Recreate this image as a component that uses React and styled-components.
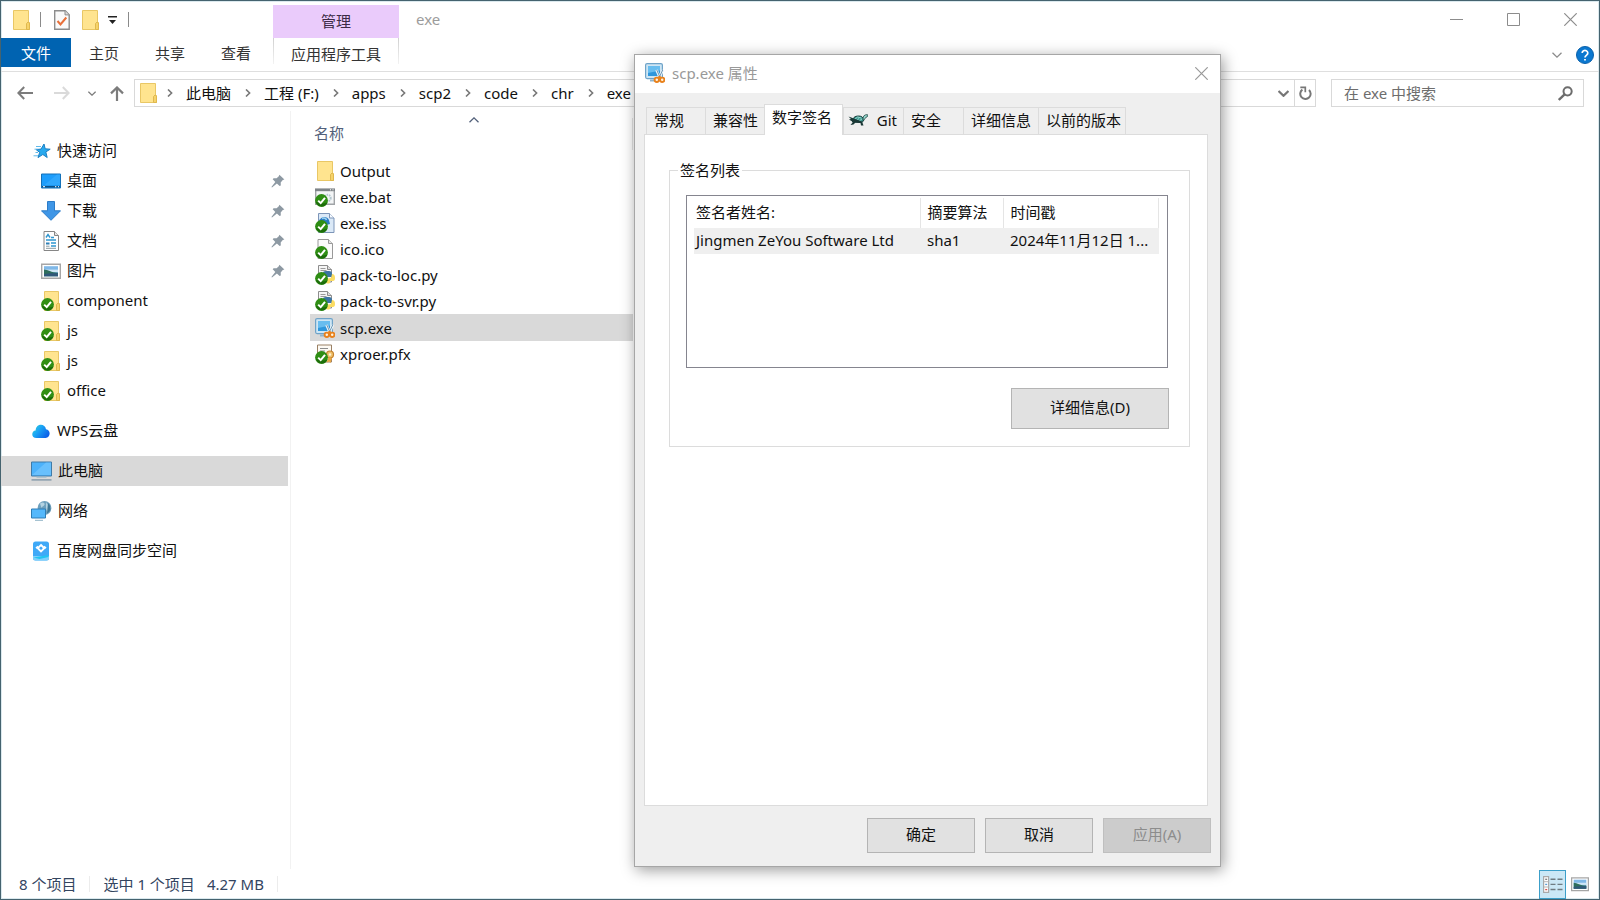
import { useState } from 'react'
import styled, { createGlobalStyle, css } from 'styled-components'

const GlobalStyle = createGlobalStyle`
    * {
        box-sizing: border-box;
    }

    body {
        margin: 0;
        background: #fff;
        color: #111;
        font-family: 'Noto Sans', 'Noto Sans CJK SC', sans-serif;
        font-size: 15px;
        line-height: 20px;
    }

    button,
    input {
        font: inherit;
        color: inherit;
    }

    button {
        padding: 0;
        border: 0;
        background: none;
        white-space: nowrap;
    }

    svg {
        display: block;
        flex: none;
    }
`

/* ---------- explorer window ---------- */

const Explorer = styled.div`
    position: relative;
    display: flex;
    flex-direction: column;
    min-height: 100vh;
    border: 1px solid #45636f;
    box-shadow: inset 0 0 0 1px #dbe9ee;
    overflow: hidden;
`

const TitleBar = styled.header`
    display: flex;
    height: 37px;
`

const QuickTools = styled.div`
    display: flex;
    align-items: center;
    flex: 0 0 272px;
    padding-left: 10px;
`

const ToolButton = styled.button`
    display: flex;
    margin-right: ${({ $gap }) => $gap || 0}px;
`

const ToolLine = styled.span`
    width: 1px;
    height: 15px;
    margin-right: ${({ $gap }) => $gap || 0}px;
    background: #8a8a8a;
`

const ManageTab = styled.button`
    width: 126px;
    margin-top: 4px;
    padding-bottom: 2px;
    background: #eacbfb;
    color: #3c2b45;
`

const WindowTitle = styled.h1`
    flex: 1;
    margin: 0;
    padding-left: 17px;
    color: #9c9c9c;
    font-size: 15px;
    font-weight: 400;
    line-height: 37px;
`

const WindowButton = styled.button`
    display: flex;
    align-items: center;
    justify-content: center;
    width: 57px;
    height: 36px;
    color: #8c8c8c;
`

const Ribbon = styled.nav`
    display: flex;
    height: 34px;
    padding-bottom: 4px;
    border-bottom: 1px solid #dfdfdf;
`

const FileTab = styled.button`
    width: 70px;
    background: #0063b1;
    color: #fff;
`

const RibbonTab = styled.button`
    width: 66px;
    padding-top: 1px;
    color: #333;
`

const AppToolsTab = styled.button`
    width: 126px;
    height: 26px;
    margin: 0 auto 0 4px;
    padding-top: 5px;
    border: 1px solid;
    border-width: 0 1px;
    border-image: linear-gradient(#cfcfcf, #f4f4f4) 1;
    color: #333;
`

const RibbonButton = styled.button`
    display: flex;
    align-items: center;
    margin-right: ${({ $gap }) => $gap}px;
    padding-top: 4px;
    color: #8c8c8c;
`

const AddressRow = styled.div`
    display: flex;
    align-items: center;
    height: 39px;
    padding: 3px 15px 0 15px;
`

const ArrowButton = styled.button`
    display: flex;
    justify-content: center;
    width: ${({ $width }) => $width}px;
    margin-left: ${({ $gap }) => $gap || 0}px;
    color: ${({ disabled }) => (disabled ? '#dadada' : '#7c7c7c')};
`

const AddressBar = styled.div`
    display: flex;
    flex: 1;
    align-items: center;
    height: 28px;
    margin-left: 3px;
    padding-left: 3px;
    border: 1px solid #d9d9d9;
    white-space: nowrap;
`

const Crumb = styled.button`
    display: flex;
    align-items: center;
    gap: 13px;

    & > svg {
        margin-left: 14px;
        color: #777;
    }

    &:first-of-type > svg {
        margin-left: 9px;
    }
`

const AddressButton = styled.button`
    display: flex;
    align-items: center;
    justify-content: center;
    width: 21px;
    height: 26px;
    margin-left: ${({ $push }) => ($push ? 'auto' : 0)};
    border-left: ${({ $line }) => ($line ? '1px solid #d9d9d9' : 0)};
    color: #777;
`

const SearchBox = styled.label`
    display: flex;
    align-items: center;
    flex: 0 0 253px;
    min-width: 0;
    height: 28px;
    margin-left: 15px;
    padding: 0 10px 0 12px;
    border: 1px solid #d9d9d9;
    color: #6d6d6d;
`

const SearchInput = styled.input`
    flex: 1;
    min-width: 0;
    padding: 0;
    border: 0;
    outline: 0;
    background: none;

    &::placeholder {
        color: #6d6d6d;
        opacity: 1;
    }
`

const Content = styled.div`
    display: flex;
    flex: 1;
`

const Sidebar = styled.nav`
    flex: 0 0 290px;
    padding: 25px 2px 0 0;
    border-right: 1px solid #f2f2f2;
`

const SideLink = styled.a`
    display: flex;
    align-items: center;
    height: 30px;
    margin-top: ${({ $section }) => ($section ? 10 : 0)}px;
    padding-left: ${({ $nested }) => ($nested ? 40 : 30)}px;
    padding-right: 3px;
    background: ${({ $active }) => ($active ? '#d9d9d9' : 'none')};
    color: #111;
    text-decoration: none;

    & > span {
        flex: 1;
        margin-left: 6px;
        padding-bottom: 2px;
    }
`

const FilePane = styled.main`
    flex: 0 0 342px;
    padding: 6px 0 0 19px;
`

const ColumnHead = styled.button`
    display: flex;
    flex-direction: column;
    width: 100%;
    height: 33px;
    padding-left: 4px;
    background: linear-gradient(#e5e5e5, #e5e5e5) right bottom / 1px 32px no-repeat;
    color: #52607a;
    text-align: left;

    & > svg {
        align-self: center;
    }
`

const FileList = styled.ul`
    margin: 8px 0 0;
    padding: 0;
    list-style: none;
`

const FileRow = styled.button`
    display: flex;
    align-items: center;
    gap: 5px;
    width: 100%;
    height: ${({ $active }) => ($active ? 27 : 26)}px;
    padding-left: 5px;
    background: ${({ $active }) => ($active ? '#d9d9d9' : 'none')};
`

const StatusBar = styled.footer`
    display: flex;
    align-items: center;
    height: 30px;
    padding-left: 18px;
    color: #33455f;
    white-space: nowrap;
`

const StatusText = styled.span`
    margin-right: ${({ $gap }) => $gap}px;
`

const StatusLine = styled.span`
    width: 1px;
    height: 16px;
    margin-right: 13px;
    background: #ececec;
`

const ViewButton = styled.button`
    display: flex;
    align-items: center;
    justify-content: center;
    width: 27px;
    height: 29px;
    border: 1px solid ${({ $active }) => ($active ? '#3c9fc9' : 'transparent')};
    background: ${({ $active }) => ($active ? '#cbe8f6' : 'none')};
`

const Views = styled.div`
    display: flex;
    margin-left: auto;
    padding-right: 6px;
`

/* ---------- properties dialog ---------- */

const Dialog = styled.section`
    position: absolute;
    top: 53px;
    left: 633px;
    width: 587px;
    padding-bottom: 13px;
    border: 1px solid #a6a6a6;
    background: #efefef;
    box-shadow: 2px 3px 14px rgba(0, 0, 0, 0.4);
`

const DialogTitle = styled.header`
    display: flex;
    align-items: center;
    gap: 7px;
    height: 38px;
    padding: 0 12px 2px 10px;
    background: #fff;
    color: #999;
`

const DialogHeading = styled.h2`
    flex: 1;
    margin: 0;
    font-size: 15px;
    font-weight: 400;
    line-height: 20px;
`

const Tabs = styled.div`
    display: flex;
    align-items: flex-end;
    padding: 11px 0 0 11px;
`

const selectedTab = css`
    height: 31px;
    margin-bottom: -1px;
    padding-bottom: 7px;
    border-right: 1px solid #dcdcdc;
    background: #fff;
`

const Tab = styled.button`
    display: flex;
    align-items: center;
    justify-content: space-between;
    width: ${({ $width }) => $width}px;
    height: 27px;
    padding: 0 6px 3px ${({ $icon }) => ($icon ? 4 : 7)}px;
    border: 1px solid #dcdcdc;
    border-width: 1px 0 0 1px;

    &:last-child {
        border-right-width: 1px;
    }

    ${({ $selected }) => $selected && selectedTab}
`

const TabPanel = styled.div`
    min-height: 672px;
    margin: 0 12px 0 9px;
    padding: 25px 17px 0 24px;
    border: 1px solid #dcdcdc;
    background: #fff;
`

const Group = styled.fieldset`
    min-width: 0;
    margin: 0;
    padding: 15px 21px 17px 16px;
    border: 1px solid #dcdcdc;
`

const Legend = styled.legend`
    margin-left: -8px;
    padding: 0 2px;
`

const ListBox = styled.div`
    height: 173px;
    padding: 2px 8px 0 7px;
    border: 1px solid #85858f;
`

const SignTable = styled.table`
    width: 100%;
    border-collapse: collapse;
    table-layout: fixed;
    white-space: nowrap;
`

const HeadCell = styled.th`
    width: ${({ $width }) => $width}px;
    height: 30px;
    padding: 0 0 3px ${({ $first }) => ($first ? 2 : 7)}px;
    border-right: 1px solid #e5e5e5;
    font-weight: 400;
    text-align: left;
`

const Cell = styled.td`
    height: 26px;
    padding: 0 0 2px ${({ $first }) => ($first ? 2 : 7)}px;
    background: #efefef;
`

const PushButton = styled.button`
    width: 108px;
    height: 35px;
    padding-bottom: 3px;
    border: 1px solid #b4b4b4;
    background: #e1e1e1;

    &:disabled {
        border-color: #bfbfbf;
        background: #ccc;
        color: #8c8c8c;
    }
`

const DetailButton = styled(PushButton)`
    display: block;
    width: 158px;
    height: 41px;
    margin: 20px -1px 0 auto;
`

const DialogButtons = styled.div`
    display: flex;
    justify-content: flex-end;
    gap: 10px;
    padding: 12px 9px 0 0;
`

/* ---------- icons ---------- */

const Folder = () => (
    <svg width="20" height="20" viewBox="0 0 20 20">
        <path d="M2.5 .5h15v12h1v7h-16z" fill="#ffe48f" stroke="#e9c765" />
        <path d="M15.5 19.5v-6l1.5-1.5 1.5 1v6.5z" fill="#f6d36a" stroke="#dfb84f" />
    </svg>
)

const Tick = () => (
    <g>
        <circle cx="6.5" cy="13.5" r="6.4" fill="#2f8e14" />
        <path d="M.9 14.5a6 6 0 0 0 11.5 1A13 13 0 0 1 .9 14.5z" fill="#1c6d0a" />
        <path d="M3.2 13.6l2.5 2.5 4.3-5.2" fill="none" stroke="#fff" strokeWidth="2" />
    </g>
)

const TickFolder = () => (
    <svg width="20" height="20" viewBox="0 0 20 20">
        <path d="M3.5 .5h14v12h1v7h-15z" fill="#ffe48f" stroke="#e9c765" />
        <path d="M15.5 19.5v-6l1.5-1.5 1.5 1v6.5z" fill="#f6d36a" stroke="#dfb84f" />
        <Tick />
    </svg>
)

const CheckDoc = () => (
    <svg width="16" height="20" viewBox="0 0 16 20">
        <path d="M.7.7h10.5l4 4v14.6H.7z" fill="#fafafa" stroke="#8c8c8c" strokeWidth="1.4" />
        <path d="M11 .7v4.2h4.2" fill="#ddd" stroke="#8c8c8c" />
        <path d="M3.5 11l3 3.5 5.8-7" fill="none" stroke="#e8703a" strokeWidth="2" />
    </svg>
)

const MoreCaret = () => (
    <svg width="9" height="8" viewBox="0 0 9 8">
        <path d="M0 0h9v1.4H0zM1 4h7L4.5 8z" fill="#222" />
    </svg>
)

const Minimize = () => (
    <svg width="13" height="13" viewBox="0 0 13 13">
        <path d="M0 6.5h13" stroke="currentColor" />
    </svg>
)

const Maximize = () => (
    <svg width="13" height="13" viewBox="0 0 13 13">
        <path d="M.5.5h12v12H.5z" fill="none" stroke="currentColor" />
    </svg>
)

const Close = () => (
    <svg width="13" height="13" viewBox="0 0 13 13">
        <path d="M.3.3l12.4 12.4M12.7.3L.3 12.7" stroke="currentColor" strokeWidth="1.2" />
    </svg>
)

const Chevron = ({ width = 10, height = 6, stroke = 1.6, up }) => (
    <svg width={width} height={height} viewBox="0 0 10 6" fill="none" stroke="currentColor" strokeWidth={stroke}>
        <path d={up ? 'M.5 5.3L5 .9l4.5 4.4' : 'M.5.7L5 5.1 9.5.7'} />
    </svg>
)

const ChevronRight = () => (
    <svg width="6" height="8" viewBox="0 0 6 8">
        <path d="M1 .5L4.6 4 1 7.5" fill="none" stroke="currentColor" strokeWidth="1.6" />
    </svg>
)

const Help = () => (
    <svg width="18" height="18" viewBox="0 0 18 18">
        <circle cx="9" cy="9" r="8.5" fill="#0b78d0" stroke="#0a60aa" />
        <path d="M6.2 7a2.8 2.6 0 1 1 4.4 2.1C9.4 10 9 10.3 9 11.6" fill="none" stroke="#fff" strokeWidth="1.7" />
        <path d="M8.1 12.9h1.8v1.7H8.1z" fill="#fff" />
    </svg>
)

const ArrowLeft = () => (
    <svg width="16" height="14" viewBox="0 0 16 14" fill="none" stroke="currentColor" strokeWidth="2">
        <path d="M7.2 1L1.4 7l5.8 6M1.6 7H16" />
    </svg>
)

const ArrowRight = () => (
    <svg width="16" height="14" viewBox="0 0 16 14" fill="none" stroke="currentColor" strokeWidth="2">
        <path d="M8.8 1l5.8 6-5.8 6M14.4 7H0" />
    </svg>
)

const ArrowUp = () => (
    <svg width="14" height="15" viewBox="0 0 14 15" fill="none" stroke="currentColor" strokeWidth="2.2">
        <path d="M1 7.4l6-5.9 6 5.9M7 2v13" />
    </svg>
)

const Refresh = () => (
    <svg width="13" height="14" viewBox="0 0 13 14" fill="none" stroke="currentColor" strokeWidth="2">
        <path d="M3.4 3.6a5.2 5.2 0 1 0 6.6.4" />
        <path d="M1.3 1.3h5v5" strokeWidth="1.7" />
    </svg>
)

const Magnifier = () => (
    <svg width="15" height="15" viewBox="0 0 15 15" fill="none" stroke="currentColor">
        <circle cx="9.6" cy="5.3" r="4.1" strokeWidth="2" />
        <path d="M6.6 8.4L.8 14" strokeWidth="2.4" />
    </svg>
)

const Star = () => (
    <svg width="20" height="20" viewBox="0 0 20 20">
        <path d="M13 3l1.200 4.800 5 .4-4.400 2.800 1.400 5.500-4.400-3-4.800 3.100 1.700-5.200-3.700-2.900 5-.4z" fill="#28a9ee" stroke="#1b7fc4" />
        <path d="M5 5.500h5M3.500 8.200h3M4.500 11.500h2.500M2.500 14.800h4.500" stroke="#5fb9ea" />
    </svg>
)

const Desktop = () => (
    <svg width="20" height="20" viewBox="0 0 20 20">
        <path d="M.5 3h19v14H.5z" fill="#1d9dfb" stroke="#1471b8" />
        <path d="M1 16L16 3.5h3V14H1z" fill="#3cadff" opacity=".6" />
        <path d="M1 15.7h18" stroke="#0b4f86" strokeWidth="1.6" />
        <path d="M2 15.7h2M14 15.7h1.3M17 15.7h1" stroke="#fff" />
    </svg>
)

const Download = () => (
    <svg width="20" height="20" viewBox="0 0 20 20">
        <path d="M6.5.5h7v9.3h6L10 19.3.5 9.8h6z" fill="#3f96e6" stroke="#2c7cc8" />
    </svg>
)

const Documents = () => (
    <svg width="20" height="20" viewBox="0 0 20 20">
        <path d="M3 .5h10.5l4 4v15H3z" fill="#fff" stroke="#868686" />
        <path d="M13.5.5v4h4" fill="#e6e6e6" stroke="#868686" />
        <path d="M5 6.5l2-3 2 3M10 6.5h3M5 9h10M10 12h5M10 15h5" stroke="#2f96cf" strokeWidth="1.4" fill="none" />
        <path d="M5 11.5h3.5v2H5z" fill="#2f7fb5" />
        <path d="M5 15.2h3.5M5 17.3h10" stroke="#8a9aa0" />
    </svg>
)

const Picture = ({ width = 20, height = 20 }) => (
    <svg width={width} height={height} viewBox="0 0 20 20">
        <path d="M.7 3.2h18.6v14.1H.7z" fill="#fff" stroke="#a6a6a6" strokeWidth="1.4" />
        <path d="M3 5.2h14v10H3z" fill="#7fb8e8" />
        <path d="M3 8.6h14V11H3z" fill="#cfe6f5" />
        <path d="M3 8.5c4 .2 7 3 14 3.3v3.4H3z" fill="#2f6e5d" />
        <path d="M3 13.2c6-1.4 9-.5 14-1v3H3z" fill="#31587a" />
    </svg>
)

const Pin = () => (
    <svg width="14" height="14" viewBox="0 0 14 14">
        <path d="M8.4.7l5 4.8-1.6.6-2.1 2.5.1 2.9-1.2.6-2.7-2.6L1 13.6l-.6-.5 3.9-5.2L1.7 5.3l.9-1.1 3 .1 2.2-2z" fill="#8d99a3" />
    </svg>
)

const Cloud = () => (
    <svg width="20" height="20" viewBox="0 0 20 20">
        <defs>
            <linearGradient id="cloud" x1="0" x2="1" y2=".6">
                <stop offset="0" stopColor="#39d5cf" />
                <stop offset=".45" stopColor="#1aa6f5" />
                <stop offset="1" stopColor="#0d62e8" />
            </linearGradient>
        </defs>
        <path d="M5.5 17C-.2 17 .2 9.600 4.600 9.400 5.200 2 14.200 2.300 15 8.300c5 .7 4.800 8.300-.4 8.700z" fill="url(#cloud)" />
    </svg>
)

const Computer = () => (
    <svg width="21" height="20" viewBox="0 0 21 20">
        <path d="M.5 1h20v14H.5z" fill="#4cb2fb" stroke="#3f7ba8" />
        <path d="M1 14L15 1.500h5V14z" fill="#7cc9ff" opacity=".6" />
        <path d="M5.500 16.200h10" stroke="#9dbccb" />
        <path d="M.5 18.900h20" stroke="#8398a8" strokeWidth="1.400" />
    </svg>
)

const Network = () => (
    <svg width="21" height="20" viewBox="0 0 21 20">
        <circle cx="13.500" cy="7" r="6.900" fill="#6ea0bd" />
        <path d="M9 2.500c3-2 5-.6 4.500 1.200-.7 1.800-3 1.600-3 3.300M15 1c1 3 4.500 3 4.800 6l-3 4c-2-2-2-5-1.800-10z" fill="#b4d3e2" />
        <path d="M17 2c3 3 3.500 6 1 9l-2 1.500z" fill="#3f7795" />
        <path d="M.5 8h14v9H.5z" fill="#55b8fb" stroke="#2f7db5" />
        <path d="M4 19.300h8" stroke="#8fb3c6" />
    </svg>
)

const SyncDisk = () => (
    <svg width="20" height="20" viewBox="0 0 20 20">
        <rect x="2" y=".5" width="16" height="19" rx="2.500" fill="#3fa9f7" />
        <path d="M2 15h16v2a2.500 2.500 0 0 1-2.500 2.500h-11A2.500 2.500 0 0 1 2 17z" fill="#7fd0fb" />
        <path d="M2.500 16.500l15-2.500v2l-9 2z" fill="#22c4f2" />
        <path d="M10 4l3.200 3.200L10 10.400 6.800 7.200z" fill="none" stroke="#fff" strokeWidth="1.900" />
        <path d="M5 7.200l2-1.800M15 7.200l-2-1.800" stroke="#fff" strokeWidth="1.600" />
    </svg>
)

const BatFile = () => (
    <svg width="20" height="20" viewBox="0 0 20 20">
        <path d="M.7 2.500h18.600v14.800H.7z" fill="#f3f5f6" stroke="#a0a4a7" strokeWidth="1.400" />
        <path d="M0 1.500h20v2.700H0z" fill="#7f8589" />
        <path d="M15 2.800h1M17.500 2.800h1" stroke="#fff" />
        <circle cx="12.500" cy="11" r="3.200" fill="none" stroke="#b3c6cf" strokeWidth="2" strokeDasharray="1.500 .8" />
        <Tick />
    </svg>
)

const IssFile = () => (
    <svg width="20" height="20" viewBox="0 0 20 20">
        <path d="M3.500.5h11l4.500 4.500v14.500H3.500z" fill="#dbe9f7" stroke="#7d95b8" />
        <path d="M14.500.5V5H19" fill="#f7fbff" stroke="#7d95b8" />
        <path d="M4 8c2-5 8-5.500 10-1l1 4-4 1z" fill="#2a7bc4" />
        <path d="M7 5.500c2-1 4 0 4.500 1.500" stroke="#9bd2f0" strokeWidth="1.500" fill="none" />
        <Tick />
    </svg>
)

const IcoFile = () => (
    <svg width="20" height="20" viewBox="0 0 20 20">
        <path d="M3 .5h10.500l4 4v15H3z" fill="#fbfbfb" stroke="#999" />
        <path d="M13.500.5v4h4" fill="#e3e3e3" stroke="#999" />
        <Tick />
    </svg>
)

const PyFile = () => (
    <svg width="20" height="20" viewBox="0 0 20 20">
        <path d="M3.500.5h9l4 4V17h-13z" fill="#f6f6f6" stroke="#8d8d8d" />
        <path d="M12.500.5v4h4" fill="#ddd" stroke="#8d8d8d" />
        <path d="M5.500 3.500h5M5.500 5.500h6" stroke="#9b9b9b" />
        <path d="M8 8q0-2 3-2h3q3 0 3 3v3h-5l-3 2z" fill="#3a74a3" />
        <path d="M17 9q3 0 3 4 0 3-2 3h-3v2q-3 1.500-5-1v-3l6-1z" fill="#fbdc62" />
        <Tick />
    </svg>
)

const PfxFile = () => (
    <svg width="20" height="20" viewBox="0 0 20 20">
        <path d="M2.500 1h14v17h-14z" fill="#fdfaf4" stroke="#9a8064" />
        <path d="M5 4.500h8M5 7h5" stroke="#8c8c8c" />
        <circle cx="15" cy="10.500" r="3.500" fill="#efc06a" stroke="#c6822c" strokeWidth="1.200" />
        <circle cx="15" cy="10.500" r="1.200" fill="#fff3d6" />
        <path d="M13.500 13.500l-2 5 3-1 1 1.500 1.500-5" fill="#e9a744" />
        <Tick />
    </svg>
)

const ScpIcon = () => (
    <svg width="20" height="20" viewBox="0 0 20 20">
        <rect x=".6" y=".6" width="16.800" height="15" rx="1.500" fill="#cfe6f4" stroke="#6fa3c8" strokeWidth="1.200" />
        <path d="M3 3h12v10H3z" fill="#2f97dc" />
        <path d="M3 3h12v4.500L3 10z" fill="#68bdef" />
        <path d="M5 17.500h6" stroke="#8eb5cf" strokeWidth="2" />
        <path d="M11.500 7l3.500 8M18 7l-4 8" stroke="#eff5f9" strokeWidth="2.600" />
        <path d="M11.800 7l3.300 7.500M17.700 7l-3.500 7.500" stroke="#6d98b7" strokeWidth="1" />
        <circle cx="11.800" cy="16.800" r="2.200" fill="#fff3df" stroke="#e8811c" strokeWidth="1.900" />
        <circle cx="17.200" cy="16.800" r="2.200" fill="#fff3df" stroke="#e8811c" strokeWidth="1.900" />
        <path d="M14.500 13v3" stroke="#e8811c" strokeWidth="2.400" />
    </svg>
)

const Turtle = () => (
    <svg width="20" height="14" viewBox="0 0 20 14">
        <path d="M4.500 9c-.5-4 2.500-6 6-6 3 0 5 1.500 5.500 4l-2 2.500z" fill="#3f9a92" stroke="#173d3b" />
        <path d="M6.500 6.500l3-2.500 4 1M7 8.500l4-3M11 8l3-2" stroke="#8fd3c8" fill="none" />
        <path d="M15 6c0-3 1.500-4.500 4.500-4.300.5 1.500 0 2.300-1.500 2.500-1 .8-1 2.300-3 3.300z" fill="#9adbd0" stroke="#173d3b" strokeWidth=".8" />
        <path d="M.5 3.500L3 6l-2 .5 4 2.500-2.500 3 3-.5 2-2 5 .5.500 2.500h2.500L14 8.500z" fill="#1a3836" />
    </svg>
)

const DetailsView = () => (
    <svg width="20" height="17" viewBox="0 0 20 17">
        <path d="M.6.6h5v15.800h-5z" fill="#fff" stroke="#a9a9a9" strokeWidth="1.200" />
        <path d="M1 5.700h4.500M1 11h4.500" stroke="#b5b5b5" />
        <path d="M2.200 3.300h2" stroke="#7c7c7c" strokeWidth="1.300" />
        <path d="M2.200 8.400h2" stroke="#5c9dd5" strokeWidth="1.300" />
        <path d="M2.200 13.600h2" stroke="#d9534f" strokeWidth="1.300" />
        <path d="M7.500 3.300h5M14.500 3.300h5M7.500 8.400h5M14.500 8.400h5M7.500 13.500h5M14.500 13.500h5" stroke="#6f7c82" strokeWidth="1.400" />
    </svg>
)

/* ---------- data ---------- */

const crumbs = ['此电脑', '工程 (F:)', 'apps', 'scp2', 'code', 'chr', 'exe']

const places = [
    { name: '快速访问', icon: Star },
    { name: '桌面', icon: Desktop, nested: true, pinned: true },
    { name: '下载', icon: Download, nested: true, pinned: true },
    { name: '文档', icon: Documents, nested: true, pinned: true },
    { name: '图片', icon: Picture, nested: true, pinned: true },
    { name: 'component', icon: TickFolder, nested: true },
    { name: 'js', icon: TickFolder, nested: true },
    { name: 'js', icon: TickFolder, nested: true },
    { name: 'office', icon: TickFolder, nested: true },
    { name: 'WPS云盘', icon: Cloud, section: true },
    { name: '此电脑', icon: Computer, section: true, active: true },
    { name: '网络', icon: Network, section: true },
    { name: '百度网盘同步空间', icon: SyncDisk, section: true },
]

const files = [
    { name: 'Output', icon: Folder },
    { name: 'exe.bat', icon: BatFile },
    { name: 'exe.iss', icon: IssFile },
    { name: 'ico.ico', icon: IcoFile },
    { name: 'pack-to-loc.py', icon: PyFile },
    { name: 'pack-to-svr.py', icon: PyFile },
    { name: 'scp.exe', icon: ScpIcon },
    { name: 'xproer.pfx', icon: PfxFile },
]

const tabs = [
    { name: '常规', width: 59 },
    { name: '兼容性', width: 59 },
    { name: '数字签名', width: 79 },
    { name: 'Git', width: 60, icon: Turtle },
    { name: '安全', width: 60 },
    { name: '详细信息', width: 75 },
    { name: '以前的版本', width: 88 },
]

const Properties = () => {
    const [tab, setTab] = useState('数字签名')

    return (
        <Dialog role="dialog" aria-labelledby="dialog-title">
            <DialogTitle>
                <ScpIcon />
                <DialogHeading id="dialog-title">scp.exe 属性</DialogHeading>
                <button aria-label="关闭属性"><Close /></button>
            </DialogTitle>
            <Tabs role="tablist">
                {tabs.map(({ name, width, icon: Icon }) => (
                    <Tab
                        key={name}
                        role="tab"
                        aria-selected={tab === name}
                        $selected={tab === name}
                        $width={width}
                        $icon={Boolean(Icon)}
                        onClick={() => setTab(name)}
                    >
                        {Icon && <Icon />}
                        {name}
                    </Tab>
                ))}
            </Tabs>
            <TabPanel role="tabpanel">
                <Group>
                    <Legend>签名列表</Legend>
                    <ListBox>
                        <SignTable>
                            <thead>
                                <tr>
                                    <HeadCell $width={226} $first>签名者姓名:</HeadCell>
                                    <HeadCell $width={83}>摘要算法</HeadCell>
                                    <HeadCell>时间戳</HeadCell>
                                </tr>
                            </thead>
                            <tbody>
                                <tr>
                                    <Cell $first>Jingmen ZeYou Software Ltd</Cell>
                                    <Cell>sha1</Cell>
                                    <Cell>2024年11月12日 1...</Cell>
                                </tr>
                            </tbody>
                        </SignTable>
                    </ListBox>
                    <DetailButton>详细信息(D)</DetailButton>
                </Group>
            </TabPanel>
            <DialogButtons>
                <PushButton>确定</PushButton>
                <PushButton>取消</PushButton>
                <PushButton disabled>应用(A)</PushButton>
            </DialogButtons>
        </Dialog>
    )
}

const App = () => {
    const [selected, setSelected] = useState('scp.exe')

    return (
        <>
            <GlobalStyle />
            <Explorer>
                <TitleBar>
                    <QuickTools>
                        <ToolButton aria-label="文件夹" $gap={9}><Folder /></ToolButton>
                        <ToolLine $gap={13} />
                        <ToolButton aria-label="属性" $gap={10}><CheckDoc /></ToolButton>
                        <ToolButton aria-label="新建文件夹" $gap={8}><Folder /></ToolButton>
                        <ToolButton aria-label="自定义快速访问工具栏" $gap={11}><MoreCaret /></ToolButton>
                        <ToolLine />
                    </QuickTools>
                    <ManageTab>管理</ManageTab>
                    <WindowTitle>exe</WindowTitle>
                    <WindowButton aria-label="最小化"><Minimize /></WindowButton>
                    <WindowButton aria-label="最大化"><Maximize /></WindowButton>
                    <WindowButton aria-label="关闭"><Close /></WindowButton>
                </TitleBar>
                <Ribbon>
                    <FileTab>文件</FileTab>
                    <RibbonTab>主页</RibbonTab>
                    <RibbonTab>共享</RibbonTab>
                    <RibbonTab>查看</RibbonTab>
                    <AppToolsTab>应用程序工具</AppToolsTab>
                    <RibbonButton aria-label="展开功能区" $gap={14}><Chevron stroke={1.3} /></RibbonButton>
                    <RibbonButton aria-label="帮助" $gap={5}><Help /></RibbonButton>
                </Ribbon>
                <AddressRow>
                    <ArrowButton aria-label="后退" $width={18}><ArrowLeft /></ArrowButton>
                    <ArrowButton aria-label="前进" $width={20} $gap={18} disabled><ArrowRight /></ArrowButton>
                    <ArrowButton aria-label="最近浏览的位置" $width={10} $gap={15}><Chevron width={8} height={5} /></ArrowButton>
                    <ArrowButton aria-label="上一级" $width={28} $gap={6}><ArrowUp /></ArrowButton>
                    <AddressBar>
                        <Folder />
                        {crumbs.map((name) => (
                            <Crumb key={name}>
                                <ChevronRight />
                                {name}
                            </Crumb>
                        ))}
                        <AddressButton aria-label="以前的位置" $push><Chevron stroke={2} width={11} height={7} /></AddressButton>
                        <AddressButton aria-label="刷新" $line><Refresh /></AddressButton>
                    </AddressBar>
                    <SearchBox>
                        <SearchInput type="text" placeholder="在 exe 中搜索" aria-label="搜索" />
                        <Magnifier />
                    </SearchBox>
                </AddressRow>
                <Content>
                    <Sidebar>
                        {places.map(({ name, icon: Icon, nested, pinned, section, active }, i) => (
                            <SideLink key={i} href="#" $nested={nested} $section={section} $active={active}>
                                <Icon />
                                <span>{name}</span>
                                {pinned && <Pin />}
                            </SideLink>
                        ))}
                    </Sidebar>
                    <FilePane>
                        <ColumnHead>
                            <Chevron up stroke={1.3} />
                            名称
                        </ColumnHead>
                        <FileList>
                            {files.map(({ name, icon: Icon }) => (
                                <li key={name}>
                                    <FileRow $active={selected === name} onClick={() => setSelected(name)}>
                                        <Icon />
                                        {name}
                                    </FileRow>
                                </li>
                            ))}
                        </FileList>
                    </FilePane>
                </Content>
                <StatusBar>
                    <StatusText $gap={13}>8 个项目</StatusText>
                    <StatusLine />
                    <StatusText $gap={12}>选中 1 个项目</StatusText>
                    <StatusText $gap={13}>4.27 MB</StatusText>
                    <StatusLine />
                    <Views>
                        <ViewButton aria-label="详细信息视图" $active><DetailsView /></ViewButton>
                        <ViewButton aria-label="大图标视图"><Picture width={18} height={18} /></ViewButton>
                    </Views>
                </StatusBar>
                <Properties />
            </Explorer>
        </>
    )
}

export default App
